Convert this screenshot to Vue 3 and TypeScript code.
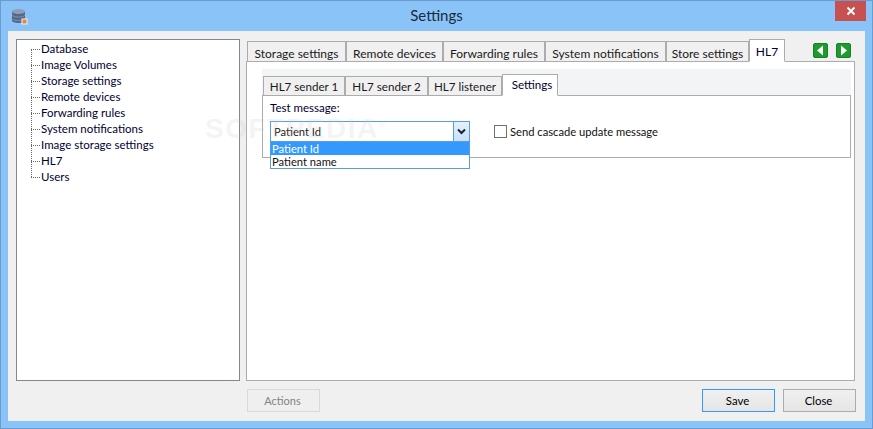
<script setup lang="ts">
const treeItems: string[] = ['Database', 'Image Volumes', 'Storage settings', 'Remote devices', 'Forwarding rules', 'System notifications', 'Image storage settings', 'HL7', 'Users']
const outerTabs = [
  { label: 'Storage settings', width: 99 },
  { label: 'Remote devices', width: 97 },
  { label: 'Forwarding rules', width: 102 },
  { label: 'System notifications', width: 121 },
  { label: 'Store settings', width: 83 },
]
const innerTabs = [
  { label: 'HL7 sender 1', width: 82 },
  { label: 'HL7 sender 2', width: 83 },
  { label: 'HL7 listener', width: 74 },
]
</script>

<template>
  <div class="window">
    <header class="titlebar">
      <svg class="app-icon" width="17" height="17" viewBox="0 0 17 17">
        <path d="M1 3.500v9c0 1.400 2.800 2.500 6.500 2.500S14 13.900 14 12.500v-9z" fill="#55688c" />
        <ellipse cx="7.500" cy="3.500" rx="6.500" ry="2.500" fill="#8f9db8" />
        <path d="M1 7c1 1.500 3 2 6.500 2S13 8.500 14 7M1 10.500c1 1.500 3 2 6.500 2s5.500-.5 6.500-2" stroke="#7f8fae" fill="none" />
        <rect x="10.500" y="10.500" width="6" height="6" fill="#f1f1ee" />
        <rect x="11.500" y="11.500" width="4" height="4" fill="#e8843c" />
      </svg>
      <span class="title">Settings</span>
      <div class="close-x">
        <svg width="10" height="10" viewBox="0 0 10 10"><path d="M1.500 1.500l7 7M8.500 1.500l-7 7" stroke="#fff" stroke-width="2" /></svg>
      </div>
    </header>

    <main class="client">
      <div class="columns">
        <ul class="tree">
          <li v-for="item in treeItems" :key="item" class="tree-row">{{ item }}</li>
        </ul>

        <section class="right">
          <div class="tabrow">
            <div v-for="t in outerTabs" :key="t.label" class="tab outer" :style="{ width: t.width + 'px' }">{{ t.label }}</div>
            <div class="tab outer selected hl7">HL7</div>
            <div class="nav">
              <svg width="15" height="15" viewBox="0 0 15 15">
                <rect x="0.500" y="0.500" width="14" height="14" rx="1.500" fill="#1f9a2c" stroke="#17812a" />
                <path d="M10 2.500v10L4 7.500z" fill="#fff" />
              </svg>
              <svg width="15" height="15" viewBox="0 0 15 15">
                <rect x="0.500" y="0.500" width="14" height="14" rx="1.500" fill="#1f9a2c" stroke="#17812a" />
                <path d="M5 2.500v10l6-5z" fill="#fff" />
              </svg>
            </div>
          </div>

          <div class="panel">
            <div class="inner-head">
              <div v-for="t in innerTabs" :key="t.label" class="tab inner" :style="{ width: t.width + 'px' }">{{ t.label }}</div>
              <div class="tab inner selected settings">Settings</div>
            </div>
            <div class="inner-panel">
              <div class="field-label">Test message:</div>
              <div class="field-row">
                <div class="combo">
                  <span class="combo-text">Patient Id</span>
                  <span class="combo-btn">
                    <svg width="9" height="7" viewBox="0 0 9 7"><path d="M1 1.500l3.500 3.500L8 1.500" fill="none" stroke="#10233f" stroke-width="2" /></svg>
                  </span>
                  <div class="dropdown">
                    <div class="opt active">Patient Id</div>
                    <div class="opt">Patient name</div>
                  </div>
                </div>
                <label class="check"><span class="box"></span>Send cascade update message</label>
              </div>
            </div>
          </div>
        </section>
      </div>

      <footer class="actions">
        <button class="btn disabled" type="button">Actions</button>
        <div class="spacer"></div>
        <button class="btn primary" type="button">Save</button>
        <button class="btn" type="button">Close</button>
      </footer>
    </main>
    <div class="watermark">SOFTPEDIA<sup>®</sup></div>
  </div>
</template>

<style>
html, body { margin: 0; padding: 0; background: #8ac3f8; }
</style>

<style scoped>
.window {
  position: relative;
  box-sizing: border-box;
  width: 873px;
  height: 429px;
  overflow: hidden;
  display: flex;
  flex-direction: column;
  background: #8ac3f8;
  border: 1px solid #6c9ccf;
  font-family: Lato, "Open Sans", sans-serif;
  font-size: 12px;
  color: #000;
}
.titlebar {
  position: relative;
  height: 30px;
  flex: none;
  display: flex;
  align-items: center;
  justify-content: center;
}
.app-icon { position: absolute; left: 10px; top: 7px; }
.title { font-size: 15px; color: #1a2a3a; margin-top: -2px; }
.close-x {
  position: absolute;
  right: 6px;
  top: 0;
  width: 31px;
  height: 20px;
  background: #c75050;
  display: flex;
  align-items: center;
  justify-content: center;
}
.client {
  flex: 1;
  margin: 0 7px 7px;
  background: #f0f0f0;
  display: flex;
  flex-direction: column;
  padding: 8px;
  min-height: 0;
}
.columns { display: flex; height: 342px; flex: none; }
.tree {
  box-sizing: border-box;
  list-style: none;
  margin: 0;
  padding: 1px 0 0 24px;
  width: 224px;
  height: 342px;
  background: #fff;
  border: 1px solid #828790;
  position: relative;
  color: #000033;
  font-size: 11.500px;
}
.tree-row {
  position: relative;
  height: 16px;
  line-height: 16px;
  white-space: nowrap;
}
.tree-row::before {
  content: "";
  position: absolute;
  left: -10px;
  top: 8px;
  width: 9px;
  border-top: 1px dotted #666;
}
.tree-row::after {
  content: "";
  position: absolute;
  left: -10px;
  top: 8px;
  height: 16px;
  border-left: 1px dotted #666;
}
.tree-row:last-child::after { display: none; }
.right { margin-left: 6px; width: 609px; display: flex; flex-direction: column; }
.tabrow {
  height: 22px;
  flex: none;
  display: flex;
  align-items: flex-end;
  padding-left: 1px;
  position: relative;
  z-index: 1;
}
.tab {
  box-sizing: border-box;
  height: 20px;
  line-height: 19px;
  text-align: center;
  background: #f0f0f0;
  border: 1px solid #acacac;
  border-bottom: none;
  color: #1a1a1a;
  white-space: nowrap;
}
.tab.selected {
  height: 23px;
  background: #fff;
  border-bottom: 1px solid #fff;
  margin-bottom: -1px;
  line-height: 20px;
  color: #000033;
}
.tab.outer { line-height: 23px; }
.tab.outer.selected { line-height: 23px; }
.tab.hl7 { width: 36px; }
.nav { margin-left: auto; display: flex; gap: 8px; padding-right: 4px; margin-bottom: 3px; }
.panel {
  box-sizing: border-box;
  flex: 1;
  background: #fff;
  border: 1px solid #acacac;
  padding: 7px 3px 0 15px;
}
.inner-head {
  height: 26px;
  background: #f3f4f6;
  display: flex;
  align-items: flex-end;
  padding-left: 1px;
  position: relative;
  z-index: 1;
  font-size: 11.600px;
}
.tab.inner { height: 19px; }
.tab.inner.selected { height: 22px; width: 56px; line-height: 20px; padding-left: 4px; }
.inner-panel {
  box-sizing: border-box;
  height: 63px;
  background: #fff;
  border: 1px solid #acacac;
  padding: 4px 8px 0 7px;
}
.field-label { height: 16px; line-height: 16px; color: #000033; font-size: 11.500px; }
.field-row { display: flex; align-items: center; margin-top: 5px; font-size: 11.200px; }
.combo {
  box-sizing: border-box;
  position: relative;
  width: 200px;
  height: 21px;
  border: 1px solid #569de5;
  background: #fff;
  display: flex;
  align-items: center;
}
.combo-text { flex: 1; padding-left: 3px; color: #222; }
.combo-btn {
  box-sizing: border-box;
  width: 16px;
  height: 19px;
  background: linear-gradient(#e4f1fb, #c9e0f7);
  border-left: 1px solid #569de5;
  display: flex;
  align-items: center;
  justify-content: center;
}
.dropdown {
  box-sizing: border-box;
  position: absolute;
  left: -1px;
  top: 19px;
  width: 200px;
  height: 28px;
  background: #fff;
  border: 1px solid #569de5;
  z-index: 3;
}
.opt { height: 13px; line-height: 13px; padding-left: 1px; color: #111; }
.opt.active { background: #3399ff; color: #fff; }
.check { display: flex; align-items: center; margin-left: 24px; color: #111; }
.box {
  box-sizing: border-box;
  width: 13px;
  height: 13px;
  border: 1px solid #707070;
  background: #fff;
  margin-right: 3px;
}
.actions { display: flex; margin-top: 8px; margin-right: 1px; height: 23px; flex: none; }
.spacer { flex: 1; }
.btn {
  box-sizing: border-box;
  width: 73px;
  height: 23px;
  padding: 0 2px 0 0;
  font: inherit;
  font-size: 11.400px;
  color: #000;
  border: 1px solid #acacac;
  background: linear-gradient(#f0f0f0, #e5e5e5);
  margin-left: 8px;
}
.btn.disabled {
  margin-left: 231px;
  font-size: 11px;
  color: #838383;
  background: #efefef;
  border-color: #d9d9d9;
}
.btn.primary { border-color: #3399ff; }
.watermark {
  position: absolute;
  left: 204px;
  top: 112px;
  font: bold 28px "Liberation Sans", sans-serif;
  letter-spacing: 1.500px;
  color: rgba(200, 200, 200, 0.2);
  pointer-events: none;
  z-index: 2;
}
.watermark sup { font-size: 9px; }
</style>
